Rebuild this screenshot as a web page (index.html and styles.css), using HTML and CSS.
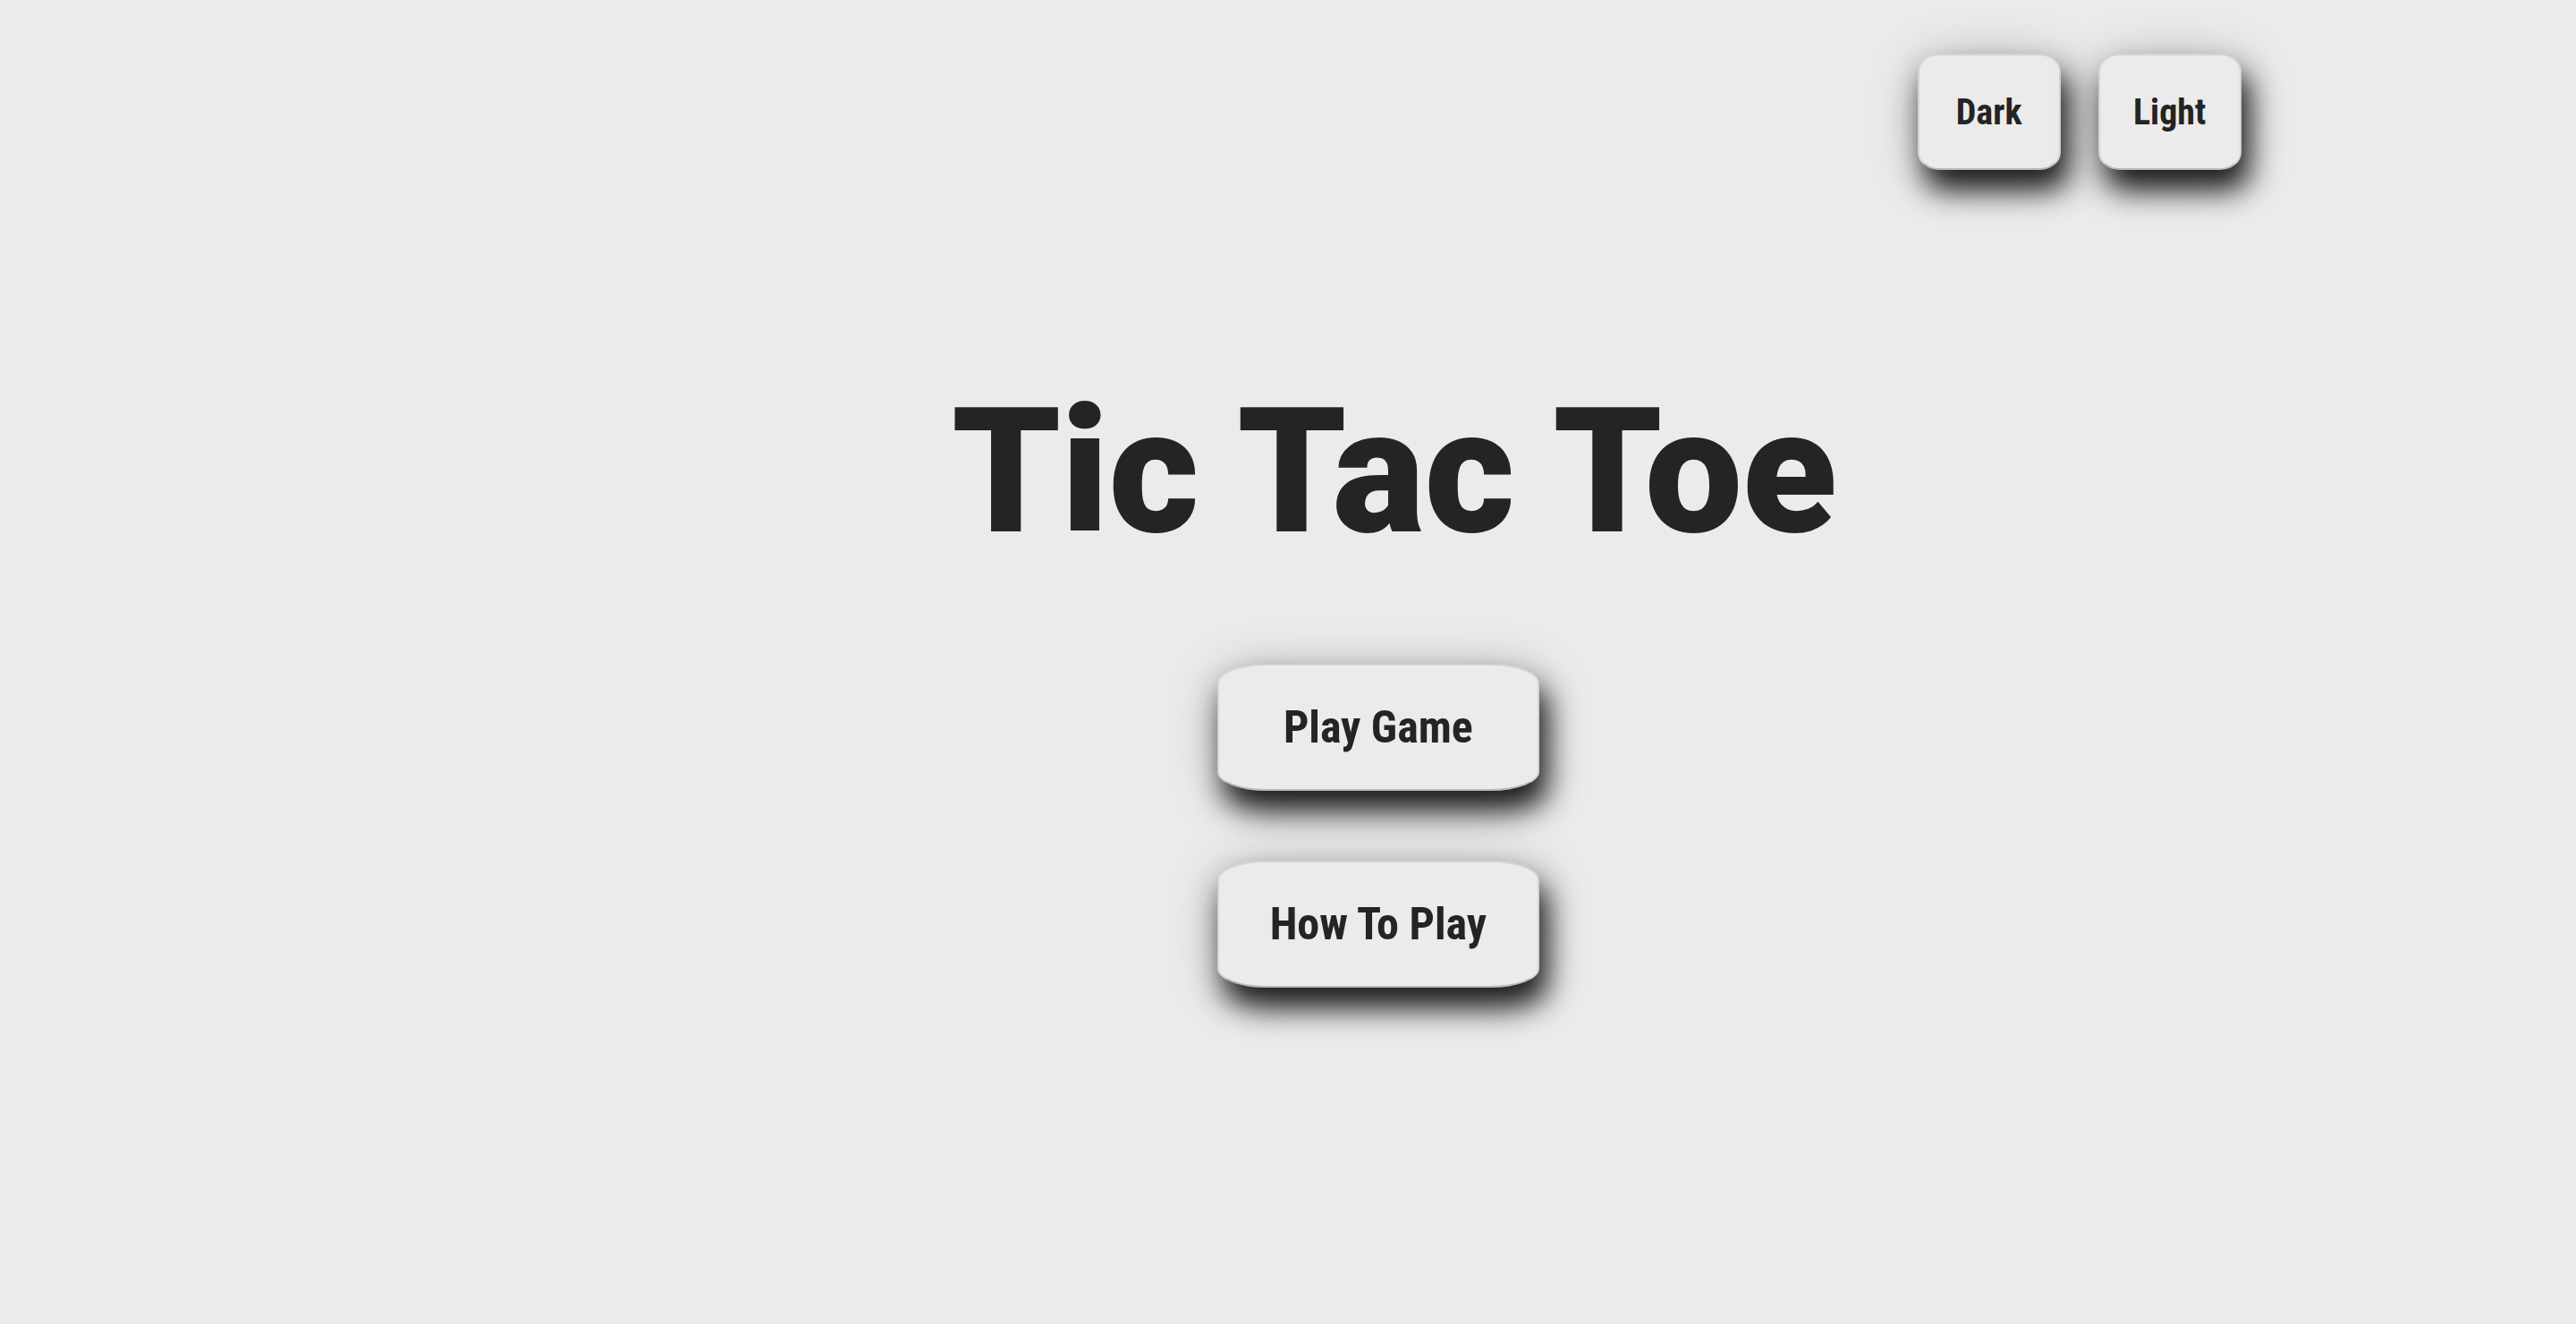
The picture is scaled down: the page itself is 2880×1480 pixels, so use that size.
FILE: index.html
```html
<!DOCTYPE html>
<html lang="en">
<head>
  <meta charset="utf-8">
  <meta name="viewport" content="width=device-width, initial-scale=1">
  <title>Tic Tac Toe</title>
  <link rel="stylesheet" href="styles.css">
</head>
<body>
  <header class="theme-bar">
    <button class="btn btn-theme" type="button">Dark</button>
    <button class="btn btn-theme" type="button">Light</button>
  </header>
  <main class="home">
    <h1 class="title">Tic Tac Toe</h1>
    <nav class="menu" aria-label="Main menu">
      <button class="btn btn-menu" type="button">Play Game</button>
      <button class="btn btn-menu" type="button">How To Play</button>
    </nav>
  </main>
</body>
</html>
```
FILE: styles.css
```css
* {
  box-sizing: border-box;
}

body {
  margin: 0;
  background: #ebebeb;
  color: #242424;
  font-family: "Roboto Condensed", Roboto, sans-serif;
}

.theme-bar {
  display: flex;
  justify-content: flex-end;
  gap: 42px;
  padding: 60px 13% 0 0;
}

.btn {
  padding: 0;
  border: 2px solid #d4d4d4;
  border-bottom-color: #bababa;
  border-radius: 15%;
  background: #ebebeb;
  color: inherit;
  font-family: inherit;
  font-weight: 700;
  cursor: pointer;
  box-shadow:
    8px 22px 32px #1c1c1c,
    2px 8px 56px rgba(0, 0, 0, 0.26);
}

.btn-theme {
  width: 160px;
  height: 130px;
  font-size: 40px;
}

.home {
  display: flex;
  flex-direction: column;
  align-items: center;
  padding: 222px 0 80px 7%;
}

.title {
  margin: 0;
  padding-left: 36px;
  font-family: Roboto, sans-serif;
  font-size: 194px;
  font-weight: 900;
  line-height: 232px;
}

.menu {
  display: flex;
  flex-direction: column;
  gap: 78px;
  margin-top: 98px;
}

.btn-menu {
  width: 360px;
  height: 142px;
  font-size: 50px;
}
```
